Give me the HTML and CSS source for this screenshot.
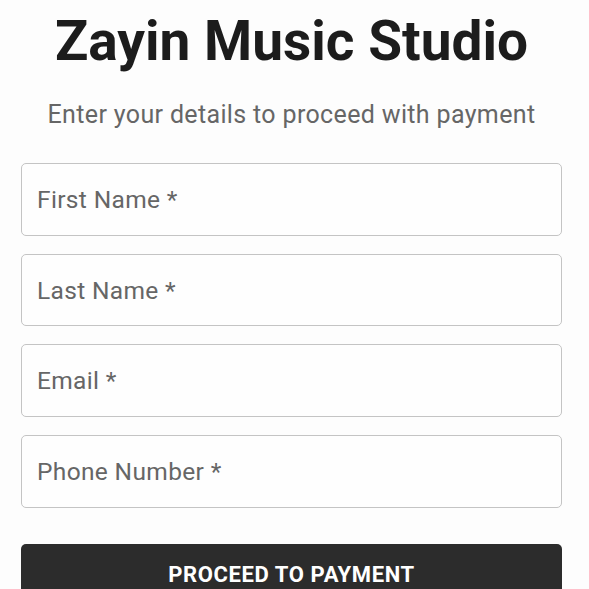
FILE: index.html
```html
<!DOCTYPE html>
<html lang="en">
<head>
<meta charset="utf-8">
<title>Zayin Music Studio</title>
<link rel="stylesheet" href="styles.css">
</head>
<body>
<main class="page">
  <h1 class="title">Zayin Music Studio</h1>
  <p class="subtitle">Enter your details to proceed with payment</p>
  <form class="form">
    <div class="field"><span class="label">First Name *</span></div>
    <div class="field"><span class="label">Last Name *</span></div>
    <div class="field"><span class="label">Email *</span></div>
    <div class="field"><span class="label">Phone Number *</span></div>
    <button type="button" class="submit">PROCEED TO PAYMENT</button>
  </form>
</main>
</body>
</html>
```
FILE: styles.css
```css
html, body {
  margin: 0;
  padding: 0;
  background: #fdfdfd;
}
body {
  font-family: Roboto, "Liberation Sans", sans-serif;
  overflow: hidden;
}
.page {
  padding: 8px 27px 0 21px;
  display: flex;
  flex-direction: column;
}
.title {
  margin: 0;
  font-size: 55px;
  line-height: 66px;
  font-weight: 700;
  color: #1c1c1c;
  text-align: center;
}
.subtitle {
  margin: 23px 0 0;
  font-size: 25px;
  letter-spacing: 0.35px;
  line-height: 36px;
  color: #666666;
  text-align: center;
}
.form {
  margin-top: 30px;
  display: flex;
  flex-direction: column;
  gap: 18px;
}
.field {
  box-sizing: border-box;
  height: 72.67px;
  border: 1px solid #c4c4c4;
  border-radius: 5px;
  background: #fefefe;
  display: flex;
  align-items: center;
  padding-left: 15px;
  padding-top: 2px;
}
.label {
  font-size: 24.5px;
  letter-spacing: 0.35px;
  color: #666666;
  line-height: 1;
}
.submit {
  margin-top: 18px;
  height: 62px;
  border: none;
  border-radius: 5px;
  background: #2c2c2c;
  color: #ffffff;
  font-family: Roboto, "Liberation Sans", sans-serif;
  font-weight: 700;
  font-size: 22px;
  letter-spacing: 0.6px;
}
```
